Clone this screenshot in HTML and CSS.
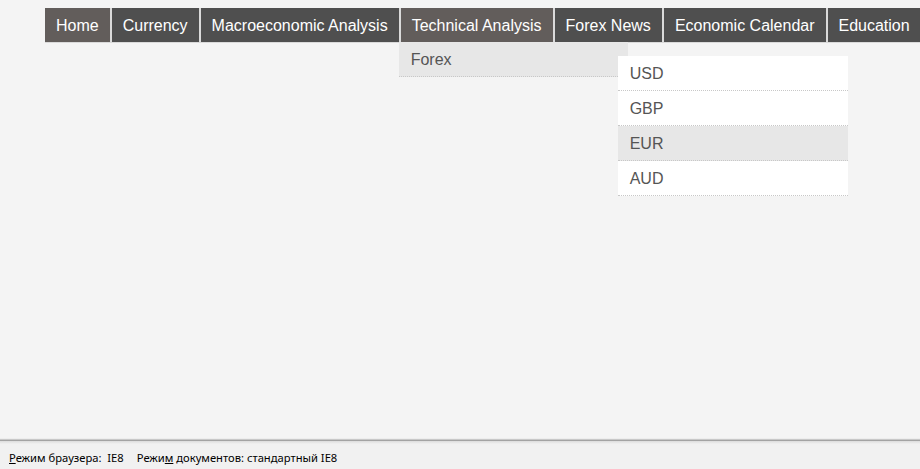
FILE: index.html
```html
<!DOCTYPE html>
<html>
<head>
<meta charset="utf-8">
<link rel="stylesheet" href="styles.css">
</head>
<body>
<div class="page">
  <div class="content">
    <nav class="nav">
      <ul class="menu">
        <li class="item active"><a>Home</a></li>
        <li class="item"><a>Currency</a></li>
        <li class="item"><a>Macroeconomic Analysis</a></li>
        <li class="item open"><a>Technical Analysis</a>
          <ul class="drop">
            <li class="drop-item"><a>Forex</a>
              <ul class="sub">
                <li class="sub-item"><a>USD</a></li>
                <li class="sub-item"><a>GBP</a></li>
                <li class="sub-item hover"><a>EUR</a></li>
                <li class="sub-item"><a>AUD</a></li>
              </ul>
            </li>
          </ul>
        </li>
        <li class="item"><a>Forex News</a></li>
        <li class="item"><a>Economic Calendar</a></li>
        <li class="item"><a>Education</a></li>
      </ul>
    </nav>
  </div>
  <div class="status">
    <span class="stat"><u>Р</u>ежим браузера:&nbsp; IE8</span>
    <span class="stat">Режи<u>м</u> документов: стандартный IE8</span>
  </div>
</div>
</body>
</html>
```

FILE: styles.css
```css
html, body {
  margin: 0;
  padding: 0;
  background: #f4f4f4;
}
.page {
  width: 920px;
  height: 469px;
  display: flex;
  flex-direction: column;
  overflow: hidden;
}
.content {
  flex: 1;
  padding: 8px 0 0 45px;
}
.nav {
  font-family: "Liberation Sans", Arial, sans-serif;
  font-size: 16px;
}
.menu {
  list-style: none;
  margin: 0;
  padding: 0 0 1px 0;
  display: flex;
  gap: 2px;
  background: #dadada;
  white-space: nowrap;
}
.item {
  position: relative;
  background: #4f4f4f;
  flex-shrink: 0;
}
.item > a {
  display: block;
  box-sizing: border-box;
  height: 34px;
  padding: 2px 11px 0;
  line-height: 32px;
  color: #fff;
}
.item.active, .item.open {
  background: #625d5b;
}
.drop {
  list-style: none;
  margin: 0;
  padding: 0;
  position: absolute;
  top: 34px;
  left: -2px;
  width: 229px;
  z-index: 2;
}
.drop-item {
  position: relative;
  background: #e7e7e7;
  border-bottom: 1px dotted #c8c8c8;
}
.drop-item > a, .sub-item > a {
  display: block;
  box-sizing: border-box;
  height: 34px;
  padding: 2px 12px 0;
  line-height: 32px;
  color: #555;
}
.sub {
  list-style: none;
  margin: 0;
  padding: 0;
  position: absolute;
  top: 14px;
  left: 219px;
  width: 230px;
  z-index: 3;
}
.sub-item {
  background: #fff;
  border-bottom: 1px dotted #c8c8c8;
}
.sub-item.hover {
  background: #e7e7e7;
}
.status {
  height: 29px;
  border-top: 1px solid #a3a3a3;
  box-shadow: 0 -1px 1px #c8c8c8;
  background: linear-gradient(#dcdcdc, #f1f1f1 3px, #f1f1f1);
  display: flex;
  align-items: center;
  gap: 13px;
  padding: 4px 0 0 9px;
  box-sizing: border-box;
  font-family: "Noto Sans", "DejaVu Sans", sans-serif;
  font-size: 11.2px;
  color: #000;
}
.stat u {
  text-decoration: underline;
}
```
